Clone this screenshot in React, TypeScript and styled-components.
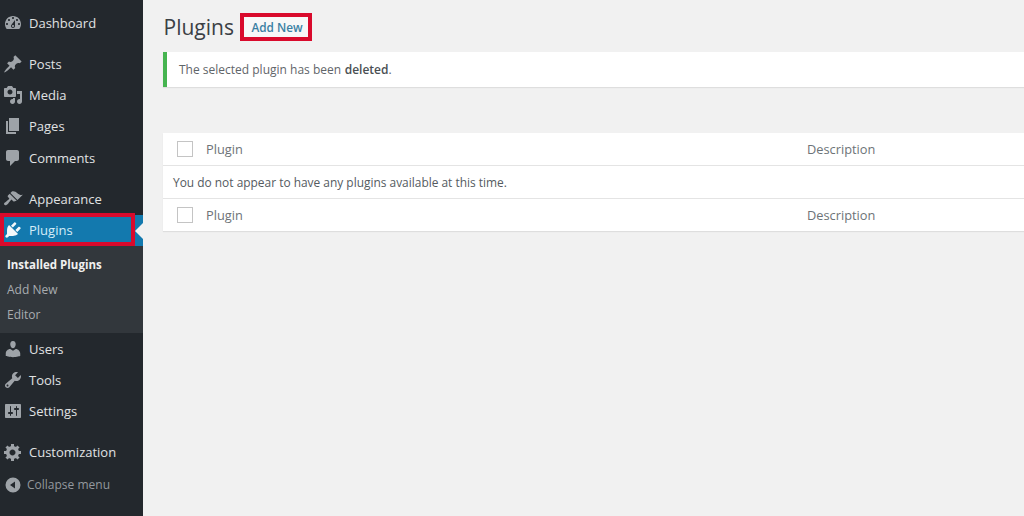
import React from "react";
import styled, { createGlobalStyle } from "styled-components";

const Global = createGlobalStyle`
  html, body { margin: 0; padding: 0; background: #f1f1f1; }
  body { font-family: "Open Sans", "Noto Sans", sans-serif; overflow: hidden; }
`;

const Page = styled.div`
  display: flex;
  width: 1024px;
  height: 516px;
  overflow: hidden;
`;

const Sidebar = styled.nav`
  width: 143px;
  flex: none;
  background: #23282d;
  padding-top: 7px;
  box-sizing: border-box;
`;

const Item = styled.div<{ $current?: boolean; $gap?: boolean }>`
  position: relative;
  display: flex;
  align-items: center;
  height: 31.25px;
  margin-top: ${(p) => (p.$gap ? "10px" : "0")};
  padding-left: 3px;
  font-size: 13px;
  color: ${(p) => (p.$current ? "#d5edf8" : "#e0e2e3")};
  background: ${(p) => (p.$current ? "#1379ae" : "transparent")};
  svg { fill: ${(p) => (p.$current ? "#f4f8fa" : "#9ea3a8")}; }
`;

const Icon = styled.svg`
  width: 20px;
  height: 20px;
  flex: none;
  margin-right: 6px;
`;

const CurrentMark = styled.span`
  position: absolute;
  left: 0;
  top: -1.5px;
  width: 135px;
  height: 33px;
  box-sizing: border-box;
  border: 4px solid #d90a2c;
`;

const Arrow = styled.span`
  position: absolute;
  right: 0;
  top: 8px;
  width: 0;
  height: 0;
  border-top: 8px solid transparent;
  border-bottom: 8px solid transparent;
  border-right: 8px solid #f1f1f1;
`;

const Submenu = styled.div`
  background: #32373c;
  height: 87.25px;
  padding: 6.5px 0 0 7px;
  box-sizing: border-box;
`;

const SubLink = styled.div<{ $active?: boolean }>`
  height: 25px;
  line-height: 25px;
  font-size: ${(p) => (p.$active ? "11.5px" : "12px")};
  font-weight: ${(p) => (p.$active ? 700 : 400)};
  color: ${(p) => (p.$active ? "#f0f0f0" : "#a8acb0")};
`;

const Collapse = styled.div`
  display: flex;
  align-items: center;
  height: 33px;
  padding-left: 3px;
  font-size: 12px;
  color: #93989d;
  svg { fill: #9ea3a8; margin-right: 4px; }
`;

const Main = styled.main`
  flex: 1;
  min-width: 0;
  padding: 13px 0 0 20px;
  background: #f1f1f1;
`;

const TitleRow = styled.div`
  display: flex;
  align-items: center;
  height: 28px;
`;

const Title = styled.h1`
  margin: 0 7px 0 0;
  width: 70px;
  padding-left: 0.5px;
  box-sizing: border-box;
  font-size: 21px;
  font-weight: 400;
  line-height: 28px;
  color: #3b4045;
`;

const AddNew = styled.a`
  box-sizing: border-box;
  width: 72px;
  height: 28px;
  display: flex;
  align-items: center;
  justify-content: center;
  padding-left: 2px;
  border: 4px solid #d90a2c;
  background: #f7f7f7;
  font-size: 11.8px;
  font-weight: 600;
  color: #3a80a3;
`;

const Notice = styled.div`
  box-sizing: border-box;
  height: 35px;
  margin-top: 11px;
  padding-left: 12px;
  display: flex;
  align-items: center;
  background: #fff;
  border-left: 4px solid #46b450;
  box-shadow: 0 1px 1px rgba(0, 0, 0, 0.08);
  font-size: 12px;
  color: #5f6569;
  b { font-weight: 600; color: #4a4f53; margin-left: 0.3em; }
`;

const Table = styled.div`
  margin-top: 46px;
  background: #fff;
  box-shadow: 0 1px 1px rgba(0, 0, 0, 0.08);
`;

const HeadRow = styled.div<{ $foot?: boolean }>`
  display: grid;
  grid-template-columns: 43px 601px 1fr;
  align-items: center;
  height: 33px;
  font-size: 12.8px;
  color: #6d7377;
  border-bottom: ${(p) => (p.$foot ? "0" : "1px solid #e4e4e4")};
  border-top: ${(p) => (p.$foot ? "1px solid #e4e4e4" : "0")};
  box-sizing: border-box;
`;

const Check = styled.span`
  display: block;
  box-sizing: border-box;
  width: 16px;
  height: 16px;
  margin-left: 14px;
  border: 1px solid #c4c4c4;
  background: #fff;
`;

const EmptyRow = styled.div`
  height: 32px;
  display: flex;
  align-items: center;
  padding: 0 0 1px 10px;
  box-sizing: border-box;
  font-size: 11.93px;
  color: #555b5f;
`;

const paths: Record<string, string> = {
  dashboard:
    "M3.76 16h12.48c1.1-1.37 1.76-3.11 1.76-5 0-4.42-3.58-8-8-8s-8 3.58-8 8c0 1.89.66 3.63 1.76 5zM10 4c.55 0 1 .45 1 1s-.45 1-1 1-1-.45-1-1 .45-1 1-1zM6 6c.55 0 1 .45 1 1s-.45 1-1 1-1-.45-1-1 .45-1 1-1zm8 0c.55 0 1 .45 1 1s-.45 1-1 1-1-.45-1-1 .45-1 1-1zm-5.37 5.55L12 7v6c0 1.1-.9 2-2 2s-2-.9-2-2c0-.57.24-1.08.63-1.45zM4 10c.55 0 1 .45 1 1s-.45 1-1 1-1-.45-1-1 .45-1 1-1zm12 0c.55 0 1 .45 1 1s-.45 1-1 1-1-.45-1-1 .45-1 1-1zm-5 3c0-.55-.45-1-1-1s-1 .45-1 1 .45 1 1 1 1-.45 1-1z",
  posts:
    "M10.44 3.02l1.82-1.82 6.36 6.35-1.83 1.82c-1.05-.68-2.48-.57-3.41.36l-.75.75c-.92.93-1.04 2.35-.35 3.41l-1.83 1.82-2.41-2.41-2.8 2.79c-.42.42-3.38 2.71-3.8 2.29s1.86-3.39 2.28-3.81l2.79-2.79L4.1 9.36l1.83-1.82c1.05.69 2.48.57 3.41-.36l.75-.75c.93-.92 1.04-2.35.35-3.41z",
  media:
    "M13 11V4c0-.55-.45-1-1-1h-1.67L9 1H5L3.67 3H2c-.55 0-1 .45-1 1v7c0 .55.45 1 1 1h10c.55 0 1-.45 1-1zM7 4.5c1.38 0 2.5 1.12 2.5 2.5S8.38 9.5 7 9.5 4.5 8.38 4.5 7 5.62 4.5 7 4.5zM14 6h5v10.5c0 1.38-1.12 2.5-2.5 2.5S14 17.88 14 16.5s1.12-2.5 2.5-2.5c.17 0 .34.02.5.05V9h-3V6zm-4 8.05V13h2v3.5c0 1.38-1.12 2.5-2.5 2.5S7 17.88 7 16.5 8.12 14 9.5 14c.17 0 .34.02.5.05z",
  pages: "M6 15V2h10v13H6zm-1 1h8v2H3V5h2v11z",
  comments:
    "M5 2h9c1.1 0 2 .9 2 2v7c0 1.1-.9 2-2 2h-2l-5 5v-5H5c-1.1 0-2-.9-2-2V4c0-1.1.9-2 2-2z",
  appearance:
    "M14.48 11.06L7.41 3.99l1.5-1.5c.5-.56 2.3-.47 3.51.32 1.21.8 1.43 1.28 2.91 2.1 1.18.64 2.45 1.26 4.45.85zm-.71.71L6.7 4.7 4.93 6.47c-.39.39-.39 1.02 0 1.41l1.06 1.06c.39.39.39 1.03 0 1.42-.6.6-1.43 1.11-2.21 1.69-.35.26-.7.53-1.01.84C1.43 13.23.4 14.75 1.4 15.75c.99 1 2.52-.03 3.86-1.37.31-.31.58-.66.85-1.01.57-.78 1.08-1.61 1.69-2.21.39-.39 1.02-.39 1.41 0l1.06 1.06c.39.39 1.02.39 1.41 0z",
  plugins:
    "M13.11 4.36L9.87 7.6 8 5.73l3.24-3.24c.35-.34 1.05-.2 1.56.32.52.51.66 1.21.31 1.55zm-8 1.77l.91-1.12 9.01 9.01-1.19.84c-.71.71-2.63 1.16-3.82 1.16H6.14L4.9 17.26c-.59.59-1.54.59-2.12 0-.59-.58-.59-1.53 0-2.12l1.24-1.24v-3.88c0-1.13.4-3.19 1.09-3.89zm7.26 3.97l3.24-3.24c.34-.35 1.04-.21 1.55.31.52.51.66 1.21.31 1.55l-3.24 3.25z",
  users:
    "M10 9.25c-2.27 0-2.73-3.44-2.73-3.44C7 4.02 7.82 2 9.97 2c2.16 0 2.98 2.02 2.71 3.81 0 0-.41 3.44-2.68 3.44zm0 2.57L12.72 10c2.39 0 4.52 2.33 4.52 4.53v2.49s-3.65 1.13-7.24 1.13c-3.65 0-7.24-1.13-7.24-1.13v-2.49c0-2.25 1.94-4.48 4.47-4.48z",
  tools:
    "M16.68 9.77c-1.34 1.34-3.3 1.67-4.95.99l-5.41 6.52c-.99.99-2.59.99-3.58 0s-.99-2.59 0-3.57l6.52-5.42c-.68-1.65-.35-3.61.99-4.95 1.28-1.28 3.12-1.62 4.72-1.06l-2.89 2.89 2.82 2.82 2.86-2.87c.53 1.58.18 3.39-1.08 4.65zM3.81 16.21c.4.39 1.04.39 1.43 0 .4-.4.4-1.04 0-1.43-.39-.4-1.03-.4-1.43 0-.39.39-.39 1.03 0 1.43z",
  settings:
    "M18 16V4c0-.55-.45-1-1-1H3c-.55 0-1 .45-1 1v12c0 .55.45 1 1 1h14c.55 0 1-.45 1-1zM8 11h1c.55 0 1 .45 1 1s-.45 1-1 1H8v1.5c0 .28-.22.5-.5.5s-.5-.22-.5-.5V13H6c-.55 0-1-.45-1-1s.45-1 1-1h1V5.5c0-.28.22-.5.5-.5s.5.22.5.5V11zm5-2h-1c-.55 0-1-.45-1-1s.45-1 1-1h1V5.5c0-.28.22-.5.5-.5s.5.22.5.5V7h1c.55 0 1 .45 1 1s-.45 1-1 1h-1v5.5c0 .28-.22.5-.5.5s-.5-.22-.5-.5V9z",
  gear:
    "M18 12h-2.18c-.17.7-.44 1.35-.81 1.93l1.54 1.54-2.1 2.1-1.54-1.54c-.58.36-1.23.63-1.91.79V19H8v-2.18c-.68-.16-1.33-.43-1.91-.79l-1.54 1.54-2.12-2.12 1.54-1.54c-.36-.58-.63-1.23-.79-1.91H1V9.03h2.17c.16-.7.44-1.35.8-1.94L2.43 5.55l2.1-2.1 1.54 1.54c.58-.37 1.24-.64 1.93-.81V2h3v2.18c.68.16 1.33.43 1.91.79l1.54-1.54 2.12 2.12-1.54 1.54c.36.59.64 1.24.8 1.94H18V12zm-8.5 1.5c1.66 0 3-1.34 3-3s-1.34-3-3-3-3 1.34-3 3 1.34 3 3 3z",
  collapse:
    "M10 2.5a7.5 7.5 0 1 1 0 15 7.5 7.5 0 0 1 0-15zM12 6.5L7 10l5 3.5z",
};

const MenuIcon = ({ name }: { name: string }) => (
  <Icon viewBox="0 0 20 20" aria-hidden="true">
    <path fillRule="evenodd" d={paths[name]} />
  </Icon>
);

export default function App() {
  return (
    <Page>
      <Global />
      <Sidebar>
        <Item><MenuIcon name="dashboard" />Dashboard</Item>
        <Item $gap><MenuIcon name="posts" />Posts</Item>
        <Item><MenuIcon name="media" />Media</Item>
        <Item><MenuIcon name="pages" />Pages</Item>
        <Item><MenuIcon name="comments" />Comments</Item>
        <Item $gap><MenuIcon name="appearance" />Appearance</Item>
        <Item $current>
          <MenuIcon name="plugins" />Plugins
          <CurrentMark />
          <Arrow />
        </Item>
        <Submenu>
          <SubLink $active>Installed Plugins</SubLink>
          <SubLink>Add New</SubLink>
          <SubLink>Editor</SubLink>
        </Submenu>
        <Item><MenuIcon name="users" />Users</Item>
        <Item><MenuIcon name="tools" />Tools</Item>
        <Item><MenuIcon name="settings" />Settings</Item>
        <Item $gap><MenuIcon name="gear" />Customization</Item>
        <Collapse><MenuIcon name="collapse" />Collapse menu</Collapse>
      </Sidebar>
      <Main>
        <TitleRow>
          <Title>Plugins</Title>
          <AddNew>Add New</AddNew>
        </TitleRow>
        <Notice>The selected plugin has been <b>deleted</b>.</Notice>
        <Table>
          <HeadRow><Check /><span>Plugin</span><span>Description</span></HeadRow>
          <EmptyRow>You do not appear to have any plugins available at this time.</EmptyRow>
          <HeadRow $foot><Check /><span>Plugin</span><span>Description</span></HeadRow>
        </Table>
      </Main>
    </Page>
  );
}
